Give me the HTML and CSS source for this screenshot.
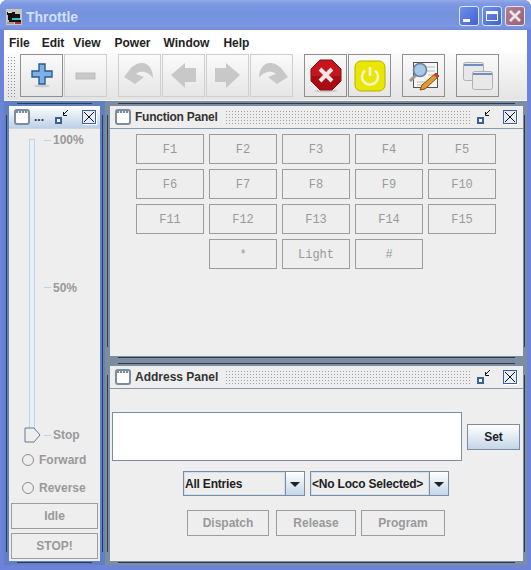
FILE: index.html
```html
<!DOCTYPE html>
<html lang="en">
<head>
    <meta charset="UTF-8">
    <title>Throttle</title>
    <link rel="stylesheet" href="styles.css">
</head>
<body>
    <div class="window">
        <div class="titlebar">
            <svg class="app-icon" width="16" height="16" viewBox="0 0 16 16">
                <rect width="16" height="16" fill="#c9c4bd"/>
                <path d="M1 3h4v1h1v-1h3v2h5v6h1v2H3v-2H2V6H1z" fill="#111"/>
                <rect x="2" y="3" width="3" height="1" fill="#eee"/>
                <rect x="6" y="9" width="8" height="2" fill="#2bc0c8"/>
                <rect x="9" y="13" width="6" height="2" fill="#a33"/>
                <rect x="1" y="13" width="7" height="2" fill="#999"/>
            </svg>
            <span class="app-title">Throttle</span>
            <div class="caption-buttons">
                <div class="caption-btn"><span class="cap-min"></span></div>
                <div class="caption-btn"><span class="cap-max"></span></div>
                <div class="caption-btn cap-close">
                    <svg width="14" height="14" viewBox="0 0 14 14"><path d="M2 2l10 10M12 2L2 12" stroke="#f1e6ea" stroke-width="2.6"/></svg>
                </div>
            </div>
        </div>

        <div class="menubar">
            <span class="menu-item">File</span>
            <span class="menu-item">Edit</span>
            <span class="menu-item">View</span>
            <span class="menu-item">Power</span>
            <span class="menu-item">Window</span>
            <span class="menu-item">Help</span>
        </div>

        <div class="toolbar">
            <div class="grip"></div>
            <div class="tool on">
                <svg width="22" height="26" viewBox="0 0 22 26">
                    <ellipse cx="11" cy="23" rx="8" ry="1.5" fill="#ccc"/>
                    <path d="M8 1h6v7h7v6h-7v7H8v-7H1V8h7z" fill="#7fb0df" stroke="#2a5a9c" stroke-width="1.4"/>
                </svg>
            </div>
            <div class="tool">
                <svg width="22" height="8" viewBox="0 0 22 8"><rect x="1" y="1" width="19" height="6" fill="#c8c8c8" stroke="#bdbdbd"/></svg>
            </div>
            <div class="tool-sep"></div>
            <div class="tool">
                <svg width="36" height="31" viewBox="0 0 36 31"><path d="M2 17L9 8C13 4 17 3 20 3C27 3 31 10 31 18C28 14 23 11 18 12C16 12 15 13 14 14L22 17L13 24z" fill="#c8c8c8"/></svg>
            </div>
            <div class="tool">
                <svg width="25" height="25" viewBox="0 0 25 25"><path d="M0 12L14 0V5H25V19H14V25z" fill="#c8c8c8"/></svg>
            </div>
            <div class="tool">
                <svg width="25" height="25" viewBox="0 0 25 25"><path d="M25 12L11 0V5H0V19H11V25z" fill="#c8c8c8"/></svg>
            </div>
            <div class="tool">
                <svg width="36" height="31" viewBox="0 0 36 31"><path d="M34 17L27 8C23 4 19 3 16 3C9 3 5 10 5 18C8 14 13 11 18 12C20 12 21 13 22 14L14 17L23 24z" fill="#c8c8c8"/></svg>
            </div>
            <div class="tool-sep"></div>
            <div class="tool on">
                <svg width="32" height="34" viewBox="0 0 32 34">
                    <ellipse cx="16" cy="32" rx="12" ry="1.5" fill="#ccc"/>
                    <path d="M10 1h12l9 9v12l-9 9H10l-9-9V10z" fill="#c8141c" stroke="#7d0e12"/>
                    <path d="M1 17h30v5l-9 9H10l-9-9z" fill="#a80c12"/>
                    <path d="M10 10l12 12M22 10L10 22" stroke="#f6e6e6" stroke-width="4"/>
                </svg>
            </div>
            <div class="tool on">
                <svg width="32" height="32" viewBox="0 0 32 32">
                    <rect x="1" y="1" width="30" height="30" rx="6" fill="#e9e600" stroke="#b5b200"/>
                    <path d="M11 10.500a8 8 0 1 0 10 0" fill="none" stroke="#f4f4d0" stroke-width="2.6"/>
                    <path d="M16 7v9" stroke="#f4f4d0" stroke-width="2.6"/>
                </svg>
            </div>
            <div class="tool-sep"></div>
            <div class="tool on">
                <svg width="32" height="30" viewBox="0 0 32 30">
                    <rect x="5.500" y="1.500" width="24" height="25" fill="#f4f4f4" stroke="#555"/>
                    <path d="M17 6h10M19 10h8M20 14h6M9 21h8M9 24h5" stroke="#bbb"/>
                    <path d="M8 14L2 20" stroke="#9a9a9a" stroke-width="3"/>
                    <circle cx="12" cy="9" r="6.500" fill="#a5c8ec" stroke="#6f8296" stroke-width="1.600"/>
                    <path d="M28 12l3 3-14 13-5 1 2-5z" fill="#e59a2d" stroke="#7a5312"/>
                    <path d="M28 12l3 3-2 2-3-3z" fill="#c8402a"/>
                </svg>
            </div>
            <div class="tool-sep"></div>
            <div class="tool on">
                <svg width="30" height="28" viewBox="0 0 30 28">
                    <rect x="0.500" y="0.500" width="20" height="18" rx="2" fill="#e8e8e8" stroke="#b0b0b0"/>
                    <rect x="1" y="2" width="19" height="2" fill="#6d8fc0"/>
                    <rect x="9.500" y="9.500" width="20" height="18" rx="2" fill="#e8e8e8" stroke="#b0b0b0"/>
                    <rect x="10" y="11" width="19" height="2" fill="#6d8fc0"/>
                </svg>
            </div>
        </div>

        <div class="desktop">
            <section class="frame frame-active">
                <header class="frame-head">
                    <span class="frame-icon"></span>
                    <span class="frame-title">...</span>
                    <svg class="frame-restore" width="14" height="15" viewBox="0 0 14 15"><rect x="1" y="8" width="5" height="5" fill="#fff" stroke="#3f5f9c" stroke-width="2"/><path d="M13 0L8 5M8.500 2V5.500H12" fill="none" stroke="#111"/></svg>
                    <span class="frame-close"><svg width="12" height="12" viewBox="0 0 12 12"><path d="M1 1l10 10M11 1L1 11" stroke="#111"/></svg></span>
                </header>
                <div class="throttle-body">
                    <div class="slider">
                        <div class="slider-track"></div>
                        <svg class="slider-thumb" width="17" height="16" viewBox="0 0 17 16"><path d="M1 1h9l6 7-6 7H1z" fill="#eee" stroke="#5f7c9d"/></svg>
                        <div class="slider-scale">
                            <div class="mark"><span class="tick"></span>100%</div>
                            <div class="mark"><span class="tick"></span>50%</div>
                            <div class="mark"><span class="tick"></span>Stop</div>
                        </div>
                    </div>
                    <div class="radio-row"><span class="radio"></span>Forward</div>
                    <div class="radio-row"><span class="radio"></span>Reverse</div>
                    <div class="btn wide">Idle</div>
                    <div class="btn wide">STOP!</div>
                </div>
            </section>

            <div class="right-col">
                <section class="frame frame-function">
                    <header class="frame-head">
                        <span class="frame-icon"></span>
                        <span class="frame-title">Function Panel</span>
                        <span class="bumps"></span>
                        <svg class="frame-restore" width="14" height="15" viewBox="0 0 14 15"><rect x="1" y="8" width="5" height="5" fill="#fff" stroke="#3f5f9c" stroke-width="2"/><path d="M13 0L8 5M8.500 2V5.500H12" fill="none" stroke="#111"/></svg>
                        <span class="frame-close"><svg width="12" height="12" viewBox="0 0 12 12"><path d="M1 1l10 10M11 1L1 11" stroke="#111"/></svg></span>
                    </header>
                    <div class="function-grid">
                        <div class="btn fn">F1</div>
                        <div class="btn fn">F2</div>
                        <div class="btn fn">F3</div>
                        <div class="btn fn">F4</div>
                        <div class="btn fn">F5</div>
                        <div class="btn fn">F6</div>
                        <div class="btn fn">F7</div>
                        <div class="btn fn">F8</div>
                        <div class="btn fn">F9</div>
                        <div class="btn fn">F10</div>
                        <div class="btn fn">F11</div>
                        <div class="btn fn">F12</div>
                        <div class="btn fn">F13</div>
                        <div class="btn fn">F14</div>
                        <div class="btn fn">F15</div>
                        <div class="btn fn">*</div>
                        <div class="btn fn">Light</div>
                        <div class="btn fn">#</div>
                    </div>
                </section>

                <section class="frame frame-address">
                    <header class="frame-head">
                        <span class="frame-icon"></span>
                        <span class="frame-title">Address Panel</span>
                        <span class="bumps"></span>
                        <svg class="frame-restore" width="14" height="15" viewBox="0 0 14 15"><rect x="1" y="8" width="5" height="5" fill="#fff" stroke="#3f5f9c" stroke-width="2"/><path d="M13 0L8 5M8.500 2V5.500H12" fill="none" stroke="#111"/></svg>
                        <span class="frame-close"><svg width="12" height="12" viewBox="0 0 12 12"><path d="M1 1l10 10M11 1L1 11" stroke="#111"/></svg></span>
                    </header>
                    <div class="address-body">
                        <div class="address-top">
                            <div class="address-list"></div>
                            <div class="set-btn">Set</div>
                        </div>
                        <div class="combo-row">
                            <div class="combo combo-entries"><span class="combo-text">All Entries</span><span class="combo-arrow"></span></div>
                            <div class="combo combo-loco"><span class="combo-text">&lt;No Loco Selected&gt;</span><span class="combo-arrow"></span></div>
                        </div>
                        <div class="action-row">
                            <div class="btn dispatch">Dispatch</div>
                            <div class="btn release">Release</div>
                            <div class="btn program">Program</div>
                        </div>
                    </div>
                </section>
            </div>
        </div>
    </div>
</body>
</html>
```

FILE: styles.css
```css
html, body {
    margin: 0;
    padding: 0;
}
body {
    width: 531px;
    height: 570px;
    overflow: hidden;
    font-family: "Liberation Sans", Arial, sans-serif;
    font-size: 12px;
    font-weight: bold;
    color: #333;
}
.window {
    width: 531px;
    height: 570px;
    display: flex;
    flex-direction: column;
    box-sizing: border-box;
    background-color: #6d83d9;
    border-radius: 7px 7px 0 0;
    overflow: hidden;
}

/* title bar */
.titlebar {
    height: 30px;
    flex: none;
    display: flex;
    align-items: center;
    padding: 4px 6px 0 6px;
    box-sizing: border-box;
    background: linear-gradient(#92a9e9 0, #7e98e2 4px, #7292de 14px, #7d97e2 26px, #7089da 30px);
}
.app-icon {
    flex: none;
}
.app-title {
    margin-left: 4px;
    font-size: 14px;
    color: #d3dff9;
}
.caption-buttons {
    margin-left: auto;
    display: flex;
    gap: 3px;
    margin-top: -2px;
}
.caption-btn {
    width: 20px;
    height: 20px;
    box-sizing: border-box;
    border: 1px solid #dfe6f8;
    border-radius: 3px;
    background: linear-gradient(135deg, #6f90ea, #3f61d4);
    display: flex;
    align-items: center;
    justify-content: center;
}
.cap-min {
    width: 7px;
    height: 3px;
    background-color: #fff;
    margin: 9px 5px 0 0;
}
.cap-max {
    width: 12px;
    height: 10px;
    box-sizing: border-box;
    border: 1px solid #fff;
    border-top-width: 3px;
}
.cap-close {
    background: linear-gradient(135deg, #b57f97, #9a6072);
}

/* menu */
.menubar {
    height: 23px;
    flex: none;
    margin: 0 4px;
    padding: 2px 0 0 5px;
    box-sizing: border-box;
    background-color: #fff;
    display: flex;
    align-items: center;
    color: #222;
}
.menu-item {
    margin-right: 13px;
}
.menu-item:nth-child(1) {
    margin-right: 12px;
}
.menu-item:nth-child(2) {
    margin-right: 9px;
}
.menu-item:nth-child(3) {
    margin-right: 14px;
}
.menu-item:nth-child(5) {
    margin-right: 14px;
}

/* toolbar */
.toolbar {
    height: 48px;
    flex: none;
    margin: 0 4px;
    padding: 1px 0 0 3px;
    box-sizing: border-box;
    background: linear-gradient(#fbfbfb, #e4e4e4);
    border-bottom: 1px solid #f6f6f6;
    display: flex;
    align-items: flex-start;
}
.grip {
    width: 9px;
    height: 43px;
    margin: 2px 4px 0 0;
    background-image: radial-gradient(#8d8d8d 0.7px, transparent 0.9px);
    background-size: 3px 3px;
}
.tool {
    width: 43px;
    height: 43px;
    margin-right: 1px;
    box-sizing: border-box;
    border: 1px solid #cfcfcf;
    display: flex;
    align-items: center;
    justify-content: center;
}
.tool.on {
    border-color: #8f8f8f;
}
.tool-sep {
    width: 10px;
    flex: none;
}

/* internal frames */
.desktop {
    flex: 1;
    display: flex;
    margin: 0 4px 5px 4px;
    min-height: 0;
}
.right-col {
    flex: 1;
    display: flex;
    flex-direction: column;
}
.frame {
    position: relative;
    box-sizing: border-box;
    display: flex;
    flex-direction: column;
    background-color: #eee;
    border-style: solid;
    border-color: #7b8d9e;
    border-width: 5px 4px 4px 5px;
}
/* dark grooves in the frame border */
.frame::before {
    content: "";
    position: absolute;
    top: -3px;
    bottom: -2px;
    left: 8px;
    right: 8px;
    border-top: 1px solid #2d3b4b;
    border-bottom: 1px solid #2d3b4b;
    pointer-events: none;
}
.frame::after {
    content: "";
    position: absolute;
    top: 9px;
    bottom: 9px;
    left: -3px;
    right: -2px;
    border-left: 1px solid #2d3b4b;
    border-right: 1px solid #2d3b4b;
    pointer-events: none;
}
.frame-active {
    border-color: #6080c4;
    border-right-width: 5px;
    width: 101px;
    flex: none;
}
.frame-active::after {
    right: -3px;
}
.frame-function {
    height: 260px;
    flex: none;
    border-bottom-width: 5px;
}
.frame-address {
    flex: 1;
    min-height: 0;
}
.frame-head {
    height: 23px;
    flex: none;
    box-sizing: border-box;
    display: flex;
    align-items: center;
    padding: 0 6px 0 5px;
    border-bottom: 1px solid #8799aa;
    background-color: #eee;
    color: #333;
}
.frame-active .frame-head {
    background: linear-gradient(#fff, #bcd0e6);
    border-bottom-color: #c9d6e3;
    padding-right: 4px;
}
.frame-icon {
    width: 16px;
    height: 16px;
    flex: none;
    box-sizing: border-box;
    border: 2px solid #7b8d9e;
    border-radius: 3px;
    background-color: #fff;
    background-image: repeating-linear-gradient(90deg, #7b8d9e 0 2px, #e4eaf4 2px 3px);
    background-size: 100% 2px;
    background-position: 0 0;
    background-repeat: no-repeat;
}
.frame-title {
    margin-left: 4px;
    white-space: nowrap;
}
.frame-function .frame-title,
.frame-address .frame-title {
    width: 83px;
}
.frame-function .frame-title {
    letter-spacing: -0.25px;
}
.bumps {
    flex: 1;
    height: 15px;
    margin-left: 7px;
    background-image: radial-gradient(#9aa2aa 0.6px, transparent 0.8px);
    background-size: 3px 3px;
}
.frame-restore {
    flex: none;
    margin-left: 7px;
}
.frame-active .frame-restore {
    margin-left: auto;
}
.frame-close {
    width: 14px;
    height: 14px;
    flex: none;
    margin-left: 12px;
    box-sizing: border-box;
    border: 1px solid #3f5f9c;
    box-shadow: 1px 1px 0 #fff;
    background-color: #e9eef5;
    display: flex;
    align-items: center;
    justify-content: center;
}
.frame-active .frame-close {
    margin-left: 13px;
}

/* buttons */
.btn {
    box-sizing: border-box;
    border: 1px solid #9c9c9c;
    background-color: #eee;
    color: #999;
    display: flex;
    align-items: center;
    justify-content: center;
}
.btn.wide {
    height: 26px;
    flex: none;
    margin: 4px 2px 0 2px;
}
.radio-row + .btn.wide {
    margin-top: 2px;
}

/* throttle panel */
.throttle-body {
    flex: 1;
    display: flex;
    flex-direction: column;
    padding-bottom: 2px;
    min-height: 0;
}
.slider {
    flex: 1;
    position: relative;
    display: flex;
    min-height: 0;
}
.slider-track {
    width: 6px;
    box-sizing: border-box;
    margin: 10px 0 12px 20px;
    border: 1px solid #bdd3ea;
    background-color: #e6eef6;
}
.slider-thumb {
    position: absolute;
    left: 15px;
    bottom: 2px;
}
.slider-scale {
    display: flex;
    flex-direction: column;
    justify-content: space-between;
    margin: 4px 0 3px 9px;
    color: #999;
}
.mark {
    display: flex;
    align-items: center;
    height: 14px;
}
.tick {
    width: 7px;
    height: 1px;
    margin-right: 2px;
    background-color: #bdd3ea;
}
.radio-row {
    height: 28px;
    flex: none;
    box-sizing: border-box;
    padding: 2px 0 0 13px;
    display: flex;
    align-items: center;
    color: #999;
}
.radio {
    width: 12px;
    height: 12px;
    box-sizing: border-box;
    border: 1px solid #8d8d8d;
    border-radius: 50%;
    margin-right: 5px;
}

/* function panel */
.function-grid {
    display: flex;
    flex-wrap: wrap;
    justify-content: center;
    align-content: flex-start;
    gap: 5px;
    padding: 5px 1px 0 0;
}
.fn {
    width: 68px;
    height: 30px;
    padding-top: 2px;
    font-family: "Liberation Mono", monospace;
    font-weight: normal;
}

/* address panel */
.address-body {
    flex: 1;
    display: flex;
    flex-direction: column;
    min-height: 0;
}
.address-top {
    display: flex;
    align-items: center;
    margin: 23px 0 0 2px;
    gap: 5px;
}
.address-list {
    width: 350px;
    height: 49px;
    box-sizing: border-box;
    background-color: #fff;
    border: 1px solid #7b8d9e;
}
.set-btn {
    width: 53px;
    height: 26px;
    box-sizing: border-box;
    border: 1px solid #7b8d9e;
    background: linear-gradient(#fff, #c3d6e8);
    display: flex;
    align-items: center;
    justify-content: center;
    color: #222;
}
.combo-row {
    display: flex;
    gap: 5px;
    margin: 10px 0 0 73px;
}
.combo {
    height: 25px;
    box-sizing: border-box;
    border: 1px solid #7b8d9e;
    display: flex;
    background-color: #eee;
    color: #222;
    letter-spacing: -0.2px;
}
.combo-entries {
    width: 122px;
}
.combo-loco {
    width: 139px;
}
.combo-text {
    flex: 1;
    display: flex;
    align-items: center;
    border: 1px solid #cfe0f0;
}
.combo-arrow {
    width: 19px;
    flex: none;
    box-sizing: border-box;
    border-left: 1px solid #7b8d9e;
    background: linear-gradient(#fff, #c3d6e8);
    position: relative;
}
.combo-arrow::after {
    content: "";
    position: absolute;
    left: 4px;
    top: 10px;
    border-left: 5px solid transparent;
    border-right: 5px solid transparent;
    border-top: 5px solid #222;
}
.action-row {
    display: flex;
    margin: 14px 0 0 77px;
}
.action-row .btn {
    height: 26px;
}
.dispatch {
    width: 82px;
    margin-right: 7px;
}
.release {
    width: 80px;
    margin-right: 5px;
}
.program {
    width: 84px;
}
```
